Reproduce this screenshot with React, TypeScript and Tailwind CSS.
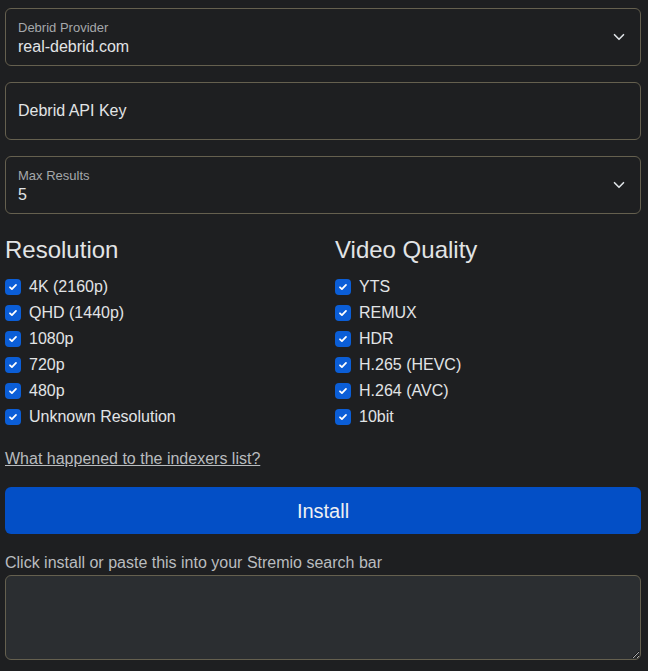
import { useState } from 'react';

const resolutions = ['4K (2160p)', 'QHD (1440p)', '1080p', '720p', '480p', 'Unknown Resolution'];
const qualities = ['YTS', 'REMUX', 'HDR', 'H.265 (HEVC)', 'H.264 (AVC)', '10bit'];

function Chevron() {
  return (
    <svg width="12" height="12" viewBox="0 0 16 16" className="shrink-0">
      <path d="M2 5l6 6 6-6" fill="none" stroke="#dee2e6" strokeWidth="2.2" strokeLinecap="round" strokeLinejoin="round" />
    </svg>
  );
}

function FloatingSelect({ label, value }: { label: string; value: string }) {
  return (
    <div className="h-[58px] rounded-[6px] border border-[#65604f] bg-[#1e1f21] flex items-center justify-between pl-3 pr-[15px]">
      <div className="flex flex-col pt-[1px]">
        <span className="text-[13px] leading-[18px] text-[#a5a8ab]">{label}</span>
        <span className="text-base leading-[20px] text-[#e2e4e6]">{value}</span>
      </div>
      <Chevron />
    </div>
  );
}

function Check({ label, checked, onToggle }: { label: string; checked: boolean; onToggle: () => void }) {
  return (
    <label className="flex items-center gap-2 h-[26px] cursor-pointer" onClick={onToggle}>
      <span
        className={
          checked
            ? 'w-4 h-4 rounded-[4px] bg-[#0b5ed7] flex items-center justify-center'
            : 'w-4 h-4 rounded-[4px] border border-[#65604f] bg-[#1e1f21]'
        }
      >
        {checked && (
          <svg width="12" height="12" viewBox="0 0 20 20">
            <path d="M5 10.5l3.2 3L15 6.5" fill="none" stroke="#fff" strokeWidth="3" strokeLinecap="round" strokeLinejoin="round" />
          </svg>
        )}
      </span>
      <span className="text-base text-[#e2e4e6]">{label}</span>
    </label>
  );
}

function CheckGroup({ title, items }: { title: string; items: string[] }) {
  const [state, setState] = useState(items.map(() => true));
  return (
    <div className="flex flex-col">
      <h3 className="text-[24px] leading-[30px] text-[#e2e4e6] mb-[9px]">{title}</h3>
      {items.map((item, i) => (
        <Check
          key={item}
          label={item}
          checked={state[i]}
          onToggle={() => setState(s => s.map((v, j) => (j === i ? !v : v)))}
        />
      ))}
    </div>
  );
}

export default function App() {
  return (
    <div
      className="min-h-[671px] bg-[#1e1f21] pl-[5px] pr-[7px] pt-2"
      style={{ fontFamily: '"Liberation Sans", Arial, sans-serif' }}
    >
      <div className="flex flex-col gap-4">
        <FloatingSelect label="Debrid Provider" value="real-debrid.com" />
        <div className="h-[58px] rounded-[6px] border border-[#65604f] bg-[#1e1f21] flex items-center px-3">
          <span className="text-base text-[#e2e4e6]">Debrid API Key</span>
        </div>
        <FloatingSelect label="Max Results" value="5" />
      </div>

      <div className="grid grid-cols-2 gap-x-6 mt-[21px]">
        <CheckGroup title="Resolution" items={resolutions} />
        <CheckGroup title="Video Quality" items={qualities} />
      </div>

      <a href="#" className="block mt-[19px] text-base leading-5 text-[#b9bcbf] underline">
        What happened to the indexers list?
      </a>

      <button className="mt-[18px] w-full h-[47px] rounded-[6px] bg-[#034fc6] text-[20px] text-[#eef0f2]">
        Install
      </button>

      <div className="mt-[19px] text-base leading-5 text-[#b9bcbf]">Click install or paste this into your Stremio search bar</div>
      <textarea className="block mt-[2px] w-full h-[85px] rounded-[6px] border border-[#65604f] bg-[#2b2e31] outline-none" />
    </div>
  );
}
